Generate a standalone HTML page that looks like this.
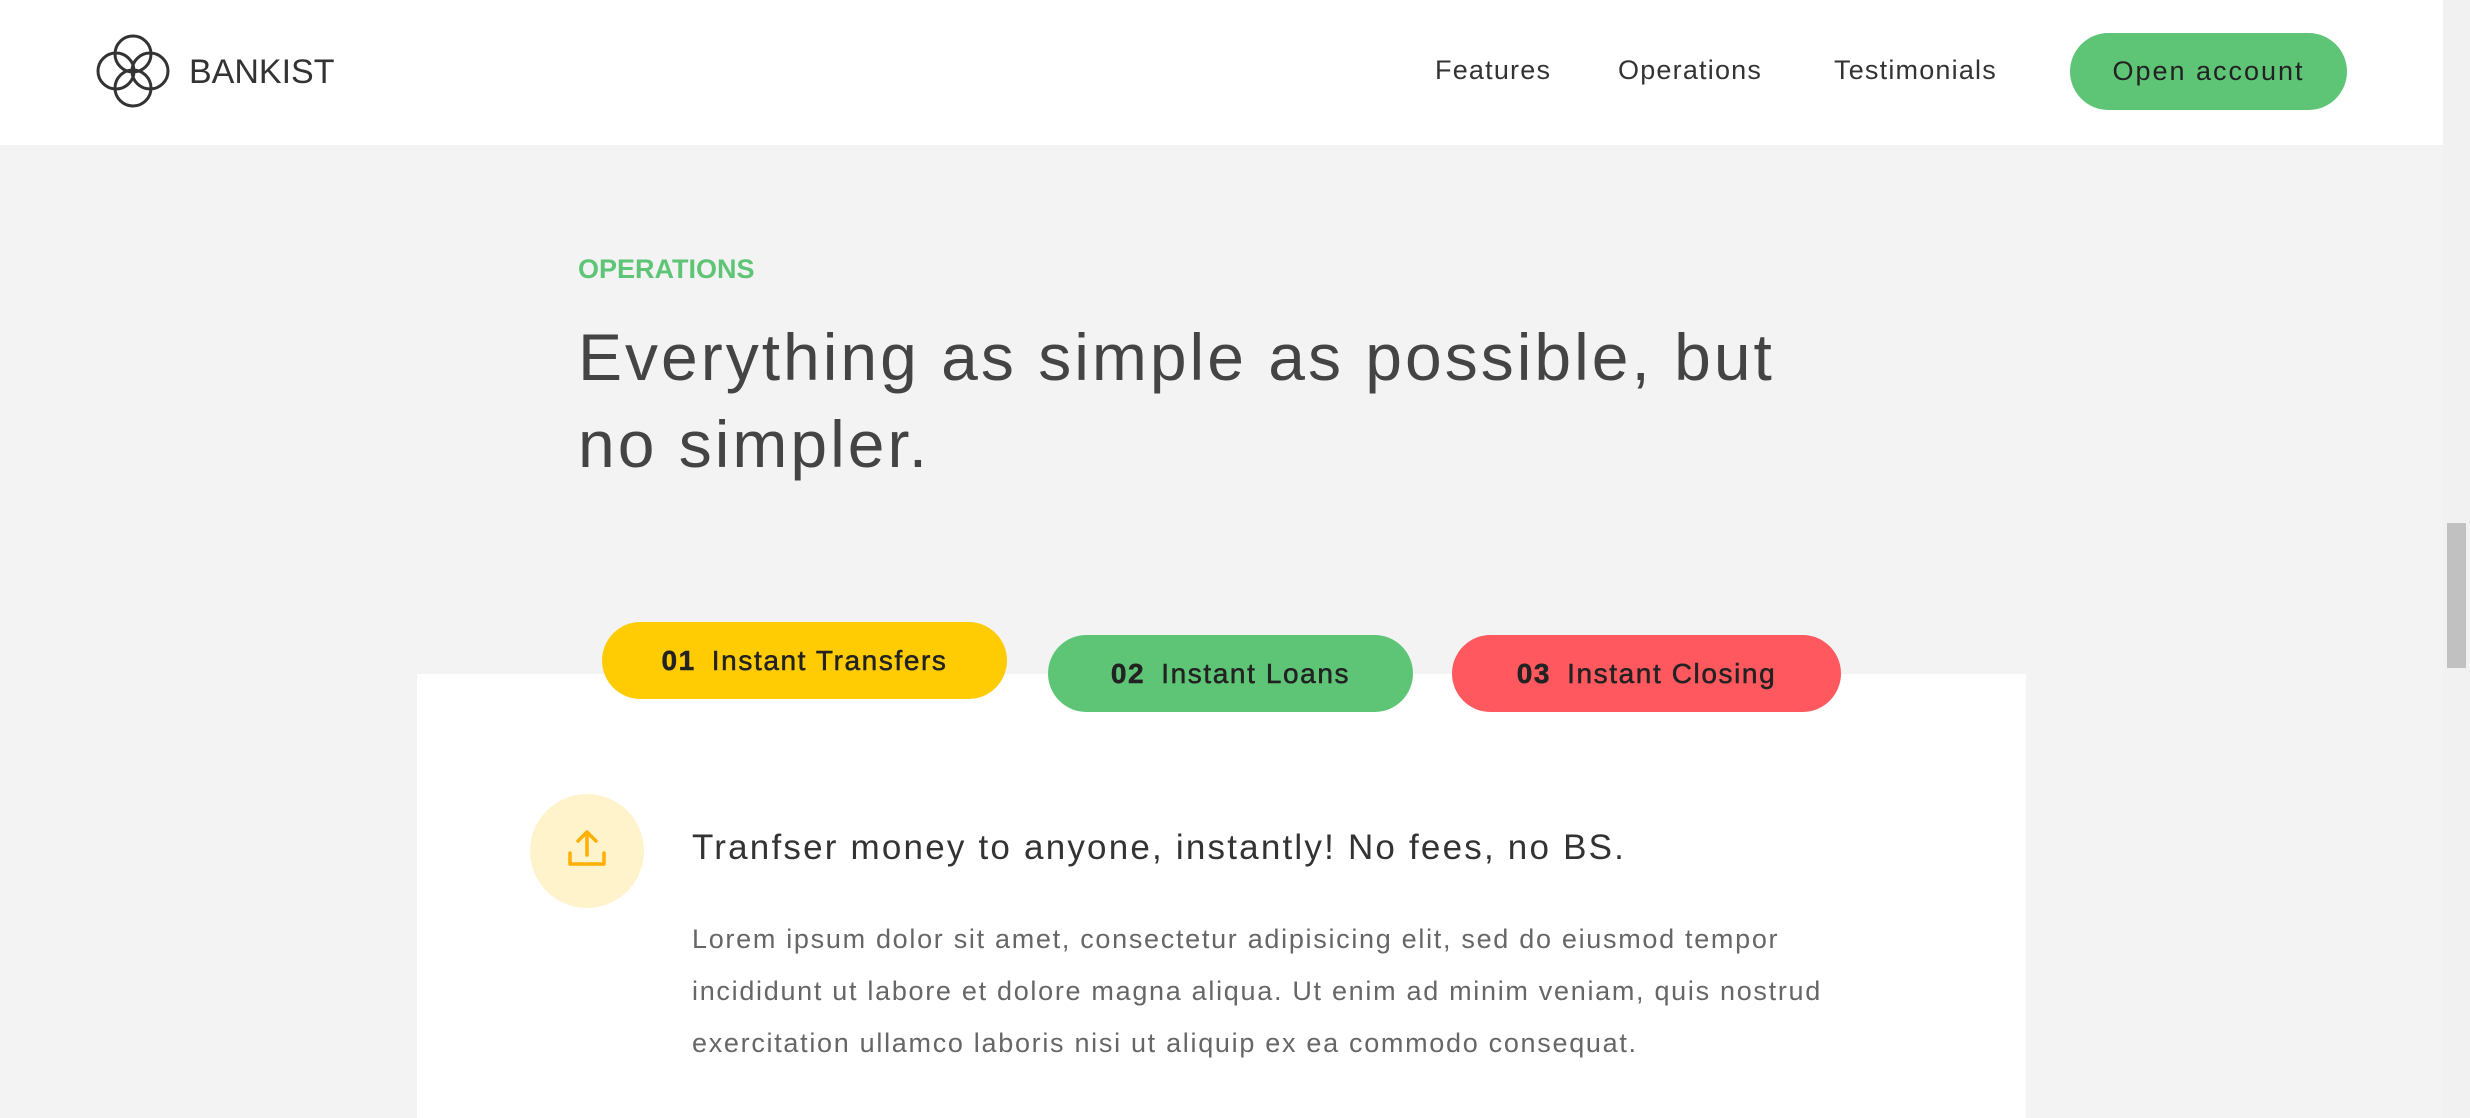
<!DOCTYPE html>
<html><head><meta charset="utf-8"><style>
*{margin:0;padding:0;box-sizing:border-box}
body{width:2470px;height:1118px;overflow:hidden;background:#f3f3f3;font-family:"Liberation Sans",sans-serif;position:relative;color:#444}
.hdr{position:absolute;left:0;top:0;width:2443px;height:145px;background:#fff}
.sb{position:absolute;right:0;top:0;width:27px;height:1118px;background:#f1f1f1}
.thumb{position:absolute;left:4px;top:523px;width:19px;height:145px;background:#c1c1c1}
.abs{position:absolute;white-space:nowrap}
.nav{font-size:27px;color:#333;top:55px;letter-spacing:1.2px}
.btn{left:2070px;top:33px;width:277px;height:77px;border-radius:40px;background:#5ec576;font-size:27px;color:#222;display:flex;align-items:center;justify-content:center;letter-spacing:2px}
.card{position:absolute;left:417px;top:674px;width:1609px;height:444px;background:#fff}
.tab{position:absolute;height:77px;border-radius:40px;display:flex;align-items:center;justify-content:center;font-size:28px;color:#222;letter-spacing:1.6px;-webkit-text-stroke:0.5px #222}
.tab b{margin-right:16px}
</style></head><body>
<div class="hdr"></div>
<svg class="abs" style="left:90px;top:30px" width="85" height="85" viewBox="90 30 85 85" fill="none" stroke="#333" stroke-width="3">
<circle cx="133" cy="54" r="18"/><circle cx="133" cy="88" r="18"/><circle cx="116" cy="71" r="18"/><circle cx="150" cy="71" r="18"/></svg>
<div class="abs" style="left:189px;top:53px;font-size:34px;color:#333">BANKIST</div>
<div class="abs nav" style="left:1435px">Features</div>
<div class="abs nav" style="left:1618px">Operations</div>
<div class="abs nav" style="left:1834px">Testimonials</div>
<div class="abs btn">Open account</div>
<div class="abs" style="left:578px;top:254px;font-size:27px;font-weight:bold;color:#5ec576">OPERATIONS</div>
<div class="abs" style="left:578px;top:314px;font-size:66px;line-height:87px;color:#444;letter-spacing:3px">Everything as simple as possible, but<br>no simpler.</div>
<div class="card"></div>
<div class="tab" style="left:602px;top:622px;width:405px;background:#ffcb03"><b>01</b>Instant Transfers</div>
<div class="tab" style="left:1048px;top:635px;width:365px;background:#5ec576"><b>02</b>Instant Loans</div>
<div class="tab" style="left:1452px;top:635px;width:389px;background:#ff585f"><b>03</b>Instant Closing</div>
<div class="abs" style="left:530px;top:794px;width:114px;height:114px;border-radius:50%;background:#fff3cc"></div>
<svg class="abs" style="left:560px;top:825px" width="54" height="50" viewBox="560 825 54 50" fill="none" stroke="#ffb003" stroke-width="3.5" stroke-linecap="round" stroke-linejoin="round">
<path d="M587 855V832M578 841l9-9 9 9M570 853v11h34v-11"/></svg>
<div class="abs" style="left:692px;top:828px;font-size:35px;color:#333;letter-spacing:2.2px">Tranfser money to anyone, instantly! No fees, no BS.</div>
<div class="abs" style="left:692px;top:913px;font-size:27px;line-height:52px;color:#666;letter-spacing:1.7px">Lorem ipsum dolor sit amet, consectetur adipisicing elit, sed do eiusmod tempor<br>incididunt ut labore et dolore magna aliqua. Ut enim ad minim veniam, quis nostrud<br>exercitation ullamco laboris nisi ut aliquip ex ea commodo consequat.</div>
<div class="sb"><div class="thumb"></div></div>
</body></html>
